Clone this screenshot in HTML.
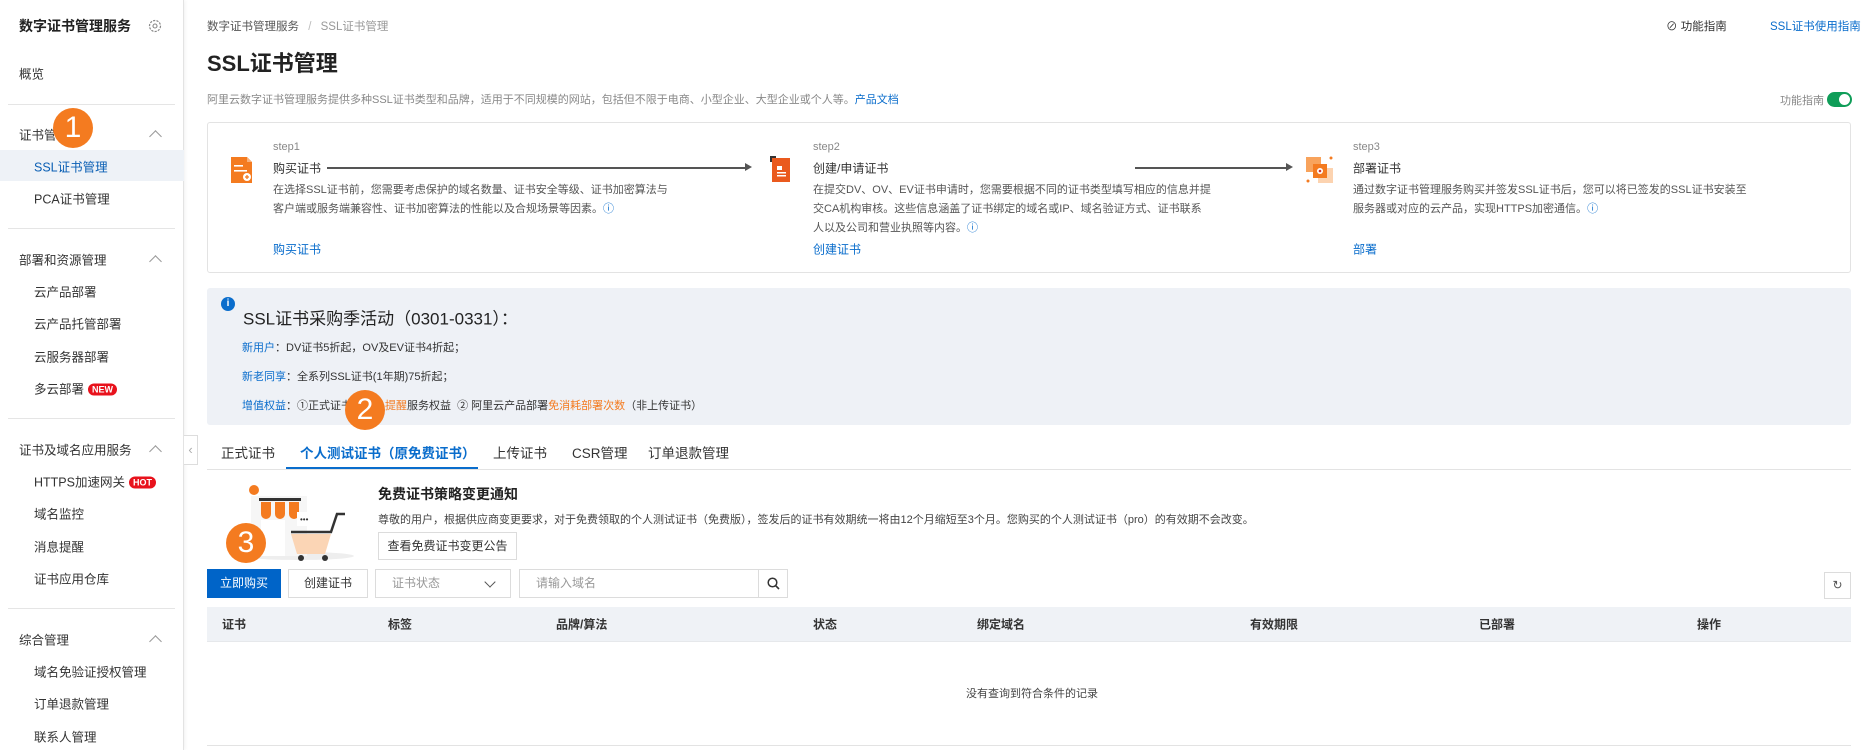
<!DOCTYPE html>
<html><head><meta charset="utf-8"><style>
*{margin:0;padding:0;box-sizing:border-box}
body{width:1863px;height:750px;overflow:hidden;background:#fff;font-family:"Liberation Sans","Noto Sans CJK SC",sans-serif;color:#333;font-size:12px;position:relative}
.a{position:absolute;white-space:nowrap}
.sb{position:absolute;left:0;top:0;width:184px;height:750px;background:#fff;border-right:1px solid #e3e3e3;box-shadow:1px 0 4px rgba(0,0,0,.06)}
.si{position:absolute;left:34px;font-size:12.5px;color:#333;transform:translateY(-50%)}
.sg{position:absolute;left:19px;font-size:12.5px;color:#333;transform:translateY(-50%)}
.dv{position:absolute;left:8px;width:167px;height:1px;background:#e5e5e5}
.chev{position:absolute;left:151px;width:9px;height:9px;border-left:1.3px solid #999;border-top:1.3px solid #999;transform:rotate(45deg)}
.c{position:absolute;width:40px;height:40px;border-radius:50%;background:#f47b20;color:#fff;font-size:30px;text-align:center;line-height:40px;font-family:"Liberation Sans",sans-serif}
.link{color:#0a6dcc}
.mid{transform:translateY(-50%)}
.badge{display:inline-block;background:#e8121c;color:#fff;font-size:9px;font-weight:bold;border-radius:8px;padding:1px 4px;margin-left:4px;vertical-align:1px}
.th{position:absolute;top:624px;font-size:12px;font-weight:bold;color:#333;transform:translateY(-50%)}
.btn{position:absolute;border:1px solid #dcdcdc;background:#fff;text-align:center;font-size:12px}
.d{font-size:11px;color:#555}
</style></head><body>
<div class="sb">
 <div class="a mid" style="left:19px;top:26px;font-size:14px;font-weight:bold;color:#222">数字证书管理服务</div>
 <svg class="a" style="left:148px;top:19px" width="14" height="14" viewBox="0 0 14 14"><circle cx="7" cy="7" r="5.5" fill="none" stroke="#888" stroke-width="1.2" stroke-dasharray="2.2 1.2"/><circle cx="7" cy="7" r="2" fill="none" stroke="#888" stroke-width="1.1"/></svg>
 <div class="sg" style="top:73px">概览</div>
 <div class="dv" style="top:104px"></div>
 <div class="sg" style="top:134px">证书管理</div><div class="chev" style="top:132px"></div>
 <div style="position:absolute;left:0;top:150px;width:184px;height:31px;background:#eef2f7"></div>
 <div class="si" style="top:166px;color:#0a5fb4">SSL证书管理</div>
 <div class="si" style="top:198px">PCA证书管理</div>
 <div class="dv" style="top:228px"></div>
 <div class="sg" style="top:259px">部署和资源管理</div><div class="chev" style="top:257px"></div>
 <div class="si" style="top:291px">云产品部署</div>
 <div class="si" style="top:323px">云产品托管部署</div>
 <div class="si" style="top:356px">云服务器部署</div>
 <div class="si" style="top:388px">多云部署<span class="badge">NEW</span></div>
 <div class="dv" style="top:418px"></div>
 <div class="sg" style="top:449px">证书及域名应用服务</div><div class="chev" style="top:447px"></div>
 <div class="si" style="top:481px">HTTPS加速网关<span class="badge">HOT</span></div>
 <div class="si" style="top:513px">域名监控</div>
 <div class="si" style="top:546px">消息提醒</div>
 <div class="si" style="top:578px">证书应用仓库</div>
 <div class="dv" style="top:608px"></div>
 <div class="sg" style="top:639px">综合管理</div><div class="chev" style="top:637px"></div>
 <div class="si" style="top:671px">域名免验证授权管理</div>
 <div class="si" style="top:703px">订单退款管理</div>
 <div class="si" style="top:736px">联系人管理</div>
</div>
<div class="c" style="left:53px;top:108px">1</div>
<div class="a" style="left:184px;top:435px;width:14px;height:30px;border:1px solid #ddd;border-left:none;background:#fff;color:#aaa;font-size:13px;line-height:28px;text-align:center">‹</div>

<div class="a mid" style="left:207px;top:26px;font-size:11.5px;color:#555">数字证书管理服务 <span style="color:#bbb;margin:0 6px">/</span> <span style="color:#999">SSL证书管理</span></div>
<div class="a mid" style="left:1666px;top:26px;font-size:11.5px;color:#333">⊘ 功能指南</div>
<div class="a mid link" style="left:1770px;top:26px;font-size:11.5px">SSL证书使用指南</div>
<div class="a mid" style="left:207px;top:62px;font-size:22px;font-weight:bold;color:#222">SSL证书管理</div>
<div class="a mid" style="left:207px;top:99px;font-size:11px;color:#888">阿里云数字证书管理服务提供多种SSL证书类型和品牌，适用于不同规模的网站，包括但不限于电商、小型企业、大型企业或个人等。<span class="link">产品文档</span></div>
<div class="a mid" style="left:1780px;top:100px;font-size:11px;color:#888">功能指南</div>
<div class="a" style="left:1827px;top:92px;width:25px;height:15px;border-radius:8px;background:#0f9d58"><div style="position:absolute;right:2px;top:2px;width:11px;height:11px;border-radius:50%;background:#fff"></div></div>

<div class="a" style="left:207px;top:122px;width:1644px;height:151px;border:1px solid #e3e3e3;border-radius:3px"></div>
<svg class="a" style="left:229px;top:156px" width="25" height="28" viewBox="0 0 25 28"><path d="M2 1h16l5 5v21H2z" fill="#f47b20"/><path d="M18 1v5h5" fill="#f9b07a"/><rect x="5" y="9" width="9" height="1.6" fill="#fff"/><rect x="5" y="14" width="13" height="1.6" fill="#fff"/><circle cx="18" cy="21" r="4" fill="#fff"/><path d="M18 19v4M16 21h4" stroke="#f47b20" stroke-width="1.3"/></svg>
<svg class="a" style="left:770px;top:156px" width="24" height="28" viewBox="0 0 24 28"><rect x="0" y="0" width="6" height="6" fill="#333"/><rect x="2" y="2" width="18" height="24" fill="#ea5a1e"/><rect x="7" y="10" width="5" height="4" fill="#fff"/><rect x="7" y="16" width="9" height="1.5" fill="#fff"/><rect x="7" y="19" width="9" height="1.5" fill="#fff"/></svg>
<svg class="a" style="left:1305px;top:155px" width="30" height="30" viewBox="0 0 30 30"><rect x="1" y="2" width="15" height="15" fill="#f8a35c"/><rect x="13" y="13" width="15" height="15" fill="#fcd3b0"/><rect x="8" y="9" width="14" height="14" fill="#f47b20"/><circle cx="15" cy="16" r="3" fill="#fff"/><circle cx="15" cy="16" r="1.3" fill="#c33"/><circle cx="26" cy="3" r="1.5" fill="#f47b20"/><circle cx="3" cy="26" r="1.5" fill="#f47b20"/></svg>
<div class="a" style="left:327px;top:167px;width:420px;height:1.5px;background:#555"></div><div class="a" style="left:745px;top:163px;border-left:7px solid #555;border-top:4.5px solid transparent;border-bottom:4.5px solid transparent"></div>
<div class="a" style="left:1135px;top:167px;width:152px;height:1.5px;background:#555"></div><div class="a" style="left:1286px;top:163px;border-left:7px solid #555;border-top:4.5px solid transparent;border-bottom:4.5px solid transparent"></div>

<div class="a mid" style="left:273px;top:147px;color:#888;font-size:11px">step1</div>
<div class="a mid" style="left:273px;top:168px;font-size:12px">购买证书</div>
<div class="a mid d" style="left:273px;top:189px">在选择SSL证书前，您需要考虑保护的域名数量、证书安全等级、证书加密算法与</div>
<div class="a mid d" style="left:273px;top:208px">客户端或服务端兼容性、证书加密算法的性能以及合规场景等因素。<span class="link">ⓘ</span></div>
<div class="a mid link" style="left:273px;top:249px;font-size:12px">购买证书</div>

<div class="a mid" style="left:813px;top:147px;color:#888;font-size:11px">step2</div>
<div class="a mid" style="left:813px;top:168px;font-size:12px">创建/申请证书</div>
<div class="a mid d" style="left:813px;top:189px">在提交DV、OV、EV证书申请时，您需要根据不同的证书类型填写相应的信息并提</div>
<div class="a mid d" style="left:813px;top:208px">交CA机构审核。这些信息涵盖了证书绑定的域名或IP、域名验证方式、证书联系</div>
<div class="a mid d" style="left:813px;top:227px">人以及公司和营业执照等内容。<span class="link">ⓘ</span></div>
<div class="a mid link" style="left:813px;top:249px;font-size:12px">创建证书</div>

<div class="a mid" style="left:1353px;top:147px;color:#888;font-size:11px">step3</div>
<div class="a mid" style="left:1353px;top:168px;font-size:12px">部署证书</div>
<div class="a mid d" style="left:1353px;top:189px">通过数字证书管理服务购买并签发SSL证书后，您可以将已签发的SSL证书安装至</div>
<div class="a mid d" style="left:1353px;top:208px">服务器或对应的云产品，实现HTTPS加密通信。<span class="link">ⓘ</span></div>
<div class="a mid link" style="left:1353px;top:249px;font-size:12px">部署</div>

<div class="a" style="left:207px;top:288px;width:1644px;height:137px;background:#eef1f6;border-radius:3px"></div>
<div class="a" style="left:221px;top:297px;width:14px;height:14px;border-radius:50%;background:#0a6dcc;color:#fff;font-size:10px;font-weight:bold;text-align:center;line-height:14px">i</div>
<div class="a mid" style="left:243px;top:317px;font-size:17px;color:#222">SSL证书采购季活动（0301-0331）：</div>
<div class="a mid" style="left:242px;top:347px;font-size:11px"><span class="link">新用户</span>：DV证书5折起，OV及EV证书4折起；</div>
<div class="a mid" style="left:242px;top:376px;font-size:11px"><span class="link">新老同享</span>：全系列SSL证书(1年期)75折起；</div>
<div class="a mid" style="left:242px;top:405px;font-size:11px"><span class="link">增值权益</span>：①正式证书享<span style="color:#f47b20">消息提醒</span>服务权益 &nbsp;② 阿里云产品部署<span style="color:#f47b20">免消耗部署次数</span>（非上传证书）</div>
<div class="c" style="left:345px;top:390px">2</div>

<div class="a" style="left:207px;top:469px;width:1644px;height:1px;background:#e3e3e3"></div>
<div class="a" style="left:286px;top:467px;width:192px;height:2px;background:#0a6dcc"></div>
<div class="a mid" style="left:221px;top:452px;font-size:13.5px">正式证书</div>
<div class="a mid" style="left:300px;top:452px;font-size:13.5px;color:#0a6dcc;font-weight:bold">个人测试证书（原免费证书）</div>
<div class="a mid" style="left:493px;top:452px;font-size:13.5px">上传证书</div>
<div class="a mid" style="left:572px;top:452px;font-size:13.5px">CSR管理</div>
<div class="a mid" style="left:648px;top:452px;font-size:13.5px">订单退款管理</div>

<svg class="a" style="left:239px;top:484px" width="118" height="78" viewBox="0 0 118 78"><ellipse cx="60" cy="72" rx="55" ry="4" fill="#eee"/><circle cx="15" cy="6" r="5" fill="#f47b20"/><rect x="12" y="12" width="56" height="60" fill="#f6f6f6"/><rect x="20" y="14" width="42" height="3" fill="#333"/><path d="M22 18h10v12a5 5 0 0 1-10 0zM36 18h10v12a5 5 0 0 1-10 0zM50 18h10v12a5 5 0 0 1-10 0z" fill="#f47b20"/><rect x="22" y="36" width="24" height="36" fill="#fff"/><rect x="58" y="28" width="20" height="14" fill="#fff"/><text x="61" y="38" font-size="8" fill="#333">•••</text><path d="M52 50h40l-6 20H58z" fill="#fbd5b5"/><path d="M52 48h40l6-18h8" fill="none" stroke="#333" stroke-width="2.5"/><circle cx="62" cy="74" r="3" fill="#333"/><circle cx="86" cy="74" r="3" fill="#333"/></svg>
<div class="c" style="left:226px;top:523px">3</div>
<div class="a mid" style="left:378px;top:494px;font-size:14px;font-weight:bold;color:#222">免费证书策略变更通知</div>
<div class="a mid" style="left:378px;top:519px;font-size:11px;color:#444">尊敬的用户，根据供应商变更要求，对于免费领取的个人测试证书（免费版），签发后的证书有效期统一将由12个月缩短至3个月。您购买的个人测试证书（pro）的有效期不会改变。</div>
<div class="btn" style="left:378px;top:532px;width:139px;height:28px;line-height:26px">查看免费证书变更公告</div>

<div class="a" style="left:207px;top:569px;width:74px;height:29px;background:#0064c8;color:#fff;text-align:center;line-height:29px">立即购买</div>
<div class="btn" style="left:288px;top:569px;width:80px;height:29px;line-height:27px">创建证书</div>
<div class="btn" style="left:375px;top:569px;width:136px;height:29px;line-height:27px;text-align:left;padding-left:16px;color:#999">证书状态<span style="position:absolute;left:110px;top:8px;width:8px;height:8px;border-right:1.3px solid #555;border-bottom:1.3px solid #555;transform:rotate(45deg)"></span></div>
<div class="btn" style="left:519px;top:569px;width:240px;height:29px;line-height:27px;text-align:left;padding-left:16px;color:#999">请输入域名</div>
<div class="btn" style="left:758px;top:569px;width:30px;height:29px"><svg style="margin-top:7px" width="13" height="13" viewBox="0 0 13 13"><circle cx="5.5" cy="5.5" r="4.3" fill="none" stroke="#333" stroke-width="1.5"/><path d="M8.7 8.7l3.3 3.3" stroke="#333" stroke-width="1.6"/></svg></div>
<div class="btn" style="left:1824px;top:572px;width:27px;height:27px;line-height:25px;color:#555;font-size:12px">↻</div>

<div class="a" style="left:207px;top:607px;width:1644px;height:35px;background:#eff2f6;border-bottom:1px solid #e6e8eb"></div>
<div class="th" style="left:222px">证书</div><div class="th" style="left:388px">标签</div><div class="th" style="left:556px">品牌/算法</div><div class="th" style="left:813px">状态</div><div class="th" style="left:977px">绑定域名</div><div class="th" style="left:1250px">有效期限</div><div class="th" style="left:1479px">已部署</div><div class="th" style="left:1697px">操作</div>
<div class="a mid" style="left:966px;top:693px;font-size:11px;color:#444">没有查询到符合条件的记录</div>
<div class="a" style="left:207px;top:745px;width:1644px;height:1px;background:#e3e3e3"></div>
</body></html>
